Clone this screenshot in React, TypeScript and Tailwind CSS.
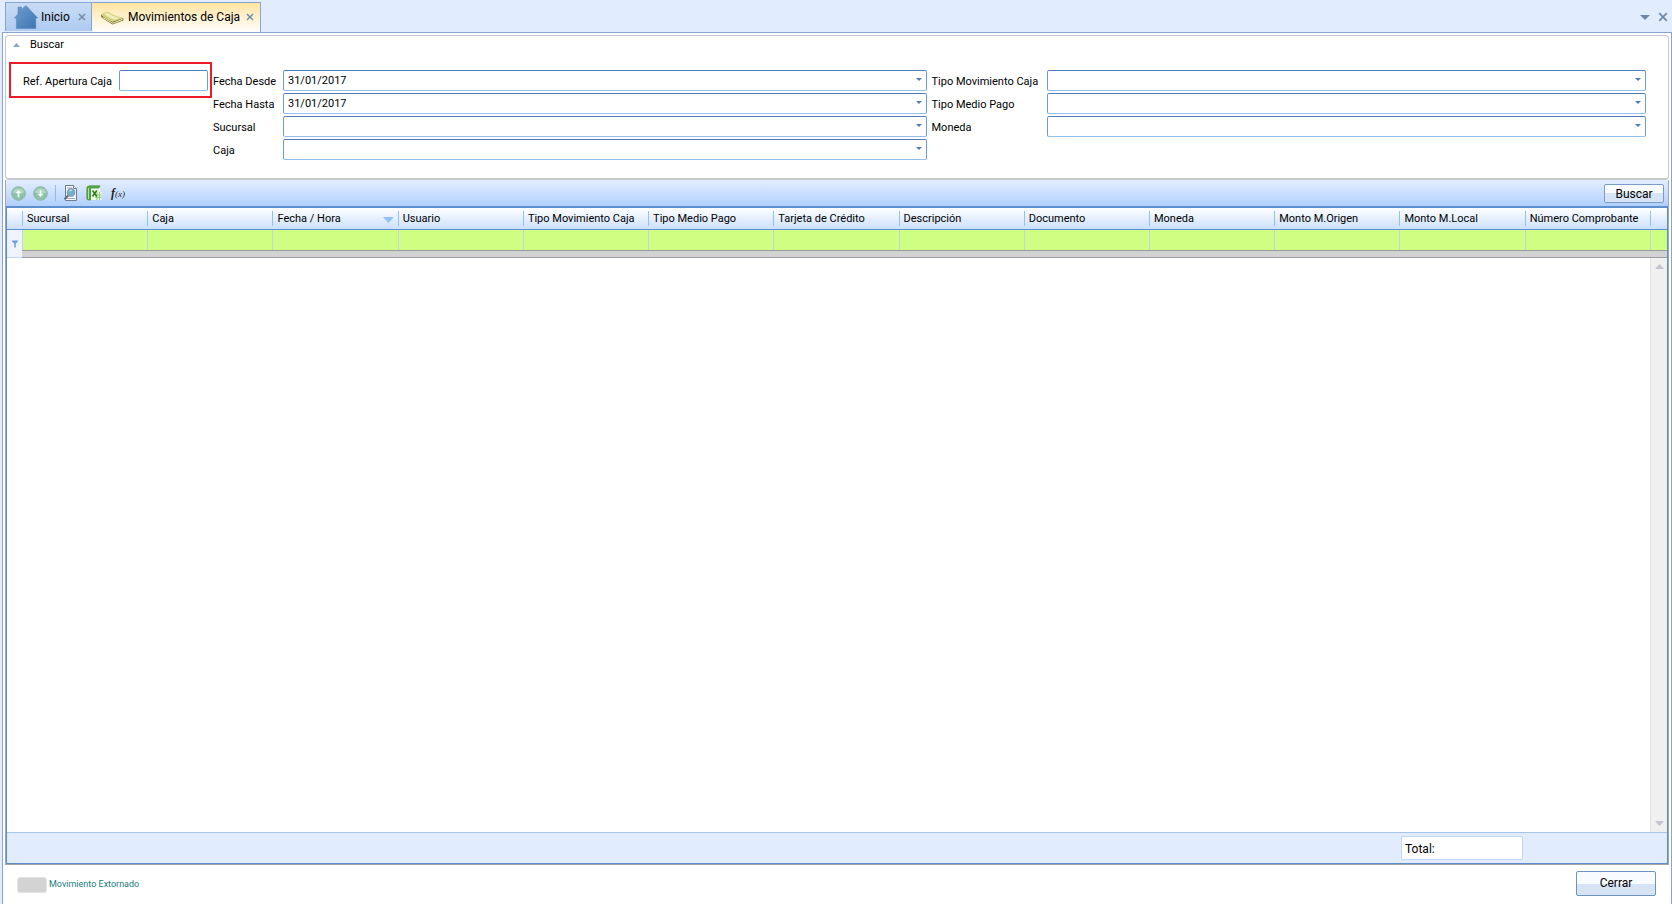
import { useState } from 'react';
import type { ReactNode } from 'react';

type Column = {
  id: string;
  label: string;
  sorted?: boolean;
};

const COLUMNS: Column[] = [
  { id: 'sucursal', label: 'Sucursal' },
  { id: 'caja', label: 'Caja' },
  { id: 'fecha', label: 'Fecha / Hora', sorted: true },
  { id: 'usuario', label: 'Usuario' },
  { id: 'tipo-movimiento', label: 'Tipo Movimiento Caja' },
  { id: 'tipo-medio', label: 'Tipo Medio Pago' },
  { id: 'tarjeta', label: 'Tarjeta de Crédito' },
  { id: 'descripcion', label: 'Descripción' },
  { id: 'documento', label: 'Documento' },
  { id: 'moneda', label: 'Moneda' },
  { id: 'monto-origen', label: 'Monto M.Origen' },
  { id: 'monto-local', label: 'Monto M.Local' },
  { id: 'comprobante', label: 'Número Comprobante' }
];

function HomeIcon() {
  return (
    <svg width="24" height="24" viewBox="0 0 24 24" aria-hidden="true">
      <defs>
        <linearGradient id="home-fill" x1="0" y1="0" x2="1" y2="1">
          <stop offset="0" stopColor="#6f9fcf" />
          <stop offset="1" stopColor="#3d74b0" />
        </linearGradient>
      </defs>
      <path d="M4 2h3.500V4.500L12 .5 23.700 13H21.800V23.500H2.400V13H.3L4 9Z" fill="url(#home-fill)" stroke="#5a8abf" strokeWidth=".6" />
    </svg>
  );
}

function BookIcon() {
  return (
    <svg width="24" height="16" viewBox="0 0 24 16" aria-hidden="true">
      <path d="M1 5.600Q.5 8 3 9.500L12.500 15.500 23.300 11.500V9L12.500 12.500Z" fill="#6e6a1d" />
      <path d="M2.500 7.800 12.800 13.700 22.500 9.800v1.200L12.800 14.700 3 9Z" fill="#f6f4d2" />
      <path d="M1 5.400Q4 3 8.800 2.800 12 6.500 23 8.800L12.600 12.800Q5.600 10.500 1 5.400Z" fill="#d3cf7c" />
      <path d="M4 4.800 8 4Q12.500 7.500 19.500 9L15 10.800Q8 9 4 4.800Z" fill="#efedb8" />
    </svg>
  );
}

function CloseIcon({ size }: { size: number }) {
  return (
    <svg width={size} height={size} viewBox="0 0 10 10" aria-hidden="true">
      <path d="M1.200 1.200 8.800 8.800M8.800 1.200 1.200 8.800" stroke="#7088a8" strokeWidth="1.700" fill="none" />
    </svg>
  );
}

function ArrowCircleIcon({ down }: { down?: boolean }) {
  return (
    <svg width="15" height="15" viewBox="0 0 15 15" aria-hidden="true">
      <circle cx="7.5" cy="7.500" r="6.800" fill="#8cc3a6" stroke="#8fb5a8" />
      <path d="M2 6.500a5.600 5 0 0 1 11 0Q7.500 8.500 2 6.500Z" fill="#b2dac4" />
      <path
        d={down ? 'M6.300 3.500h2.400v4h2.500L7.500 11.500 3.800 7.500h2.500Z' : 'M6.300 11.500h2.400v-4h2.500L7.500 3.500 3.800 7.500h2.500Z'}
        fill="#f2fbf6"
        stroke="#7fb598"
        strokeWidth=".4"
      />
    </svg>
  );
}

function PreviewIcon() {
  return (
    <svg width="16" height="16" viewBox="0 0 16 16" aria-hidden="true">
      <path d="M2.500.5h8l3 3v12h-11Z" fill="#f3f6fa" stroke="#6d7b8c" />
      <path d="M10.500.5v3h3" fill="#fff" stroke="#6d7b8c" />
      <path d="M4 13.500h8M4 3h5" stroke="#9fb0c2" />
      <circle cx="8" cy="7.500" r="3.700" fill="#6db4cc" stroke="#7c9bb0" strokeWidth="1.200" />
      <path d="M6 6.500a2.500 2.500 0 0 1 3-1.200" stroke="#d9f2f7" fill="none" />
      <path d="M5.200 10.500 1.500 14.200" stroke="#5a6b7c" strokeWidth="2" />
    </svg>
  );
}

function ExcelIcon() {
  return (
    <svg width="16" height="16" viewBox="0 0 16 16" aria-hidden="true">
      <path d="M.8 3Q1 .8 3.500.8H14L12.600 3.500H5V15H2Q.8 15 .8 13Z" fill="#57a442" stroke="#3f8a2e" strokeWidth=".6" />
      <path d="M2.500 3v11" stroke="#b9dfa4" />
      <path d="M5 3.500h9v3.500h1.500v8H5Z" fill="#eef8e6" />
      <path d="M9 10h6.500M9 12.500h6.500M11 7v8M13.500 7v8" stroke="#8fc978" />
      <path d="M6.500 5.500 10.800 11.500M10.800 5.500 6.500 11.500" stroke="#2f7d27" strokeWidth="1.600" />
    </svg>
  );
}

function Triangle({ className, up }: { className: string; up?: boolean }) {
  return (
    <svg className={className} viewBox="0 0 10 5" preserveAspectRatio="none" aria-hidden="true">
      <path d={up ? 'M5 0 10 5H0Z' : 'M0 0H10L5 5Z'} fill="currentColor" />
    </svg>
  );
}

const FIELD =
  'h-[21px] w-full rounded-[2px] border border-t-[#4f80bd] border-r-[#6a9ad8] border-b-[#92bfee] border-l-[#6a9ad8] bg-white pt-[2px]';

function Combo({ id, label, value = '' }: { id: string; label: string; value?: string }) {
  return (
    <>
      <label htmlFor={id} className="h-[21px] leading-[23px] whitespace-nowrap">
        {label}
      </label>
      <div className="relative">
        <select id={id} defaultValue={value} className={`${FIELD} appearance-none pr-5 pl-1 outline-none`}>
          <option value={value}>{value}</option>
        </select>
        <Triangle className="pointer-events-none absolute top-2 right-[5px] h-[3px] w-[6px] text-[#4f7dbb]" />
      </div>
    </>
  );
}

function ToolButton({ label, children }: { label: string; children: ReactNode }) {
  return (
    <button type="button" aria-label={label} className="flex h-4 items-center">
      {children}
    </button>
  );
}

function TabStrip() {
  return (
    <header className="flex items-end justify-between pr-1 pl-[5px]">
      <nav className="flex h-[30px] text-[12px]">
        <div className="flex h-[29px] w-[87px] items-center border border-b-0 border-[#86a5cf] bg-linear-to-b from-[#c9dcf5] to-[#aecbf0] pl-2">
          <button type="button" className="flex items-center gap-[3px]">
            <HomeIcon />
            Inicio
          </button>
          <button type="button" aria-label="Cerrar Inicio" className="ml-2">
            <CloseIcon size={8} />
          </button>
        </div>
        <div className="-mb-px flex w-[169px] items-center border border-b-0 border-l-0 border-[#86a5cf] bg-linear-to-b from-[#ffe3a0] to-white pb-[2px] pl-2">
          <button type="button" className="flex items-center gap-1 whitespace-nowrap">
            <BookIcon />
            Movimientos de Caja
          </button>
          <button type="button" aria-label="Cerrar Movimientos de Caja" className="ml-[6px]">
            <CloseIcon size={8} />
          </button>
        </div>
      </nav>
      <div className="flex h-[30px] items-center gap-2">
        <button type="button" aria-label="Lista de ventanas">
          <Triangle className="h-[5px] w-[10px] text-[#7088a8]" />
        </button>
        <button type="button" aria-label="Cerrar ventana">
          <CloseIcon size={10} />
        </button>
      </div>
    </header>
  );
}

function SearchPanel() {
  const [open, setOpen] = useState(true);
  const [apertura, setApertura] = useState('');

  return (
    <section className="rounded-[4px] border border-b-2 border-[#c8c8c8] bg-white">
      <button
        type="button"
        aria-expanded={open}
        onClick={() => setOpen(!open)}
        className="flex h-[18px] items-center gap-[10px] pl-[7px]"
      >
        <Triangle up className="h-1 w-[7px] text-[#86a5cf]" />
        Buscar
      </button>
      {open && (
        <form className="flex items-start pt-2 pr-[22px] pb-[18px] pl-[3px]">
          <div className="flex h-9 w-[203px] shrink-0 items-center justify-between border-2 border-[#ed1c24] pr-[2px] pl-3">
            <label htmlFor="apertura" className="h-[21px] leading-[23px] whitespace-nowrap">
              Ref. Apertura Caja
            </label>
            <div className="w-[89px]">
              <input
                id="apertura"
                value={apertura}
                onChange={(e) => setApertura(e.target.value)}
                className={`${FIELD} block px-1 outline-none`}
              />
            </div>
          </div>
          <div className="grid flex-[716] grid-cols-[70px_1fr] gap-y-[2px] pt-2 pl-px">
            <Combo id="desde" label="Fecha Desde" value="31/01/2017" />
            <Combo id="hasta" label="Fecha Hasta" value="31/01/2017" />
            <Combo id="sucursal" label="Sucursal" />
            <Combo id="caja" label="Caja" />
          </div>
          <div className="grid flex-[717] grid-cols-[115px_1fr] gap-y-[2px] pt-2 pl-[5px]">
            <Combo id="tipo-movimiento" label="Tipo Movimiento Caja" />
            <Combo id="tipo-medio" label="Tipo Medio Pago" />
            <Combo id="moneda" label="Moneda" />
          </div>
        </form>
      )}
    </section>
  );
}

function Toolbar() {
  return (
    <div className="flex h-[28px] items-center justify-between border-b-2 border-[#5b8fd0] bg-linear-to-b from-[#e3eeff] to-[#b1d0fd] pr-1 pl-[5px]">
      <div className="flex items-center gap-[7px]">
        <ToolButton label="Subir">
          <ArrowCircleIcon />
        </ToolButton>
        <ToolButton label="Bajar">
          <ArrowCircleIcon down />
        </ToolButton>
        <span className="h-4 w-px bg-[#9ab8dd]" />
        <ToolButton label="Vista previa">
          <PreviewIcon />
        </ToolButton>
        <ToolButton label="Exportar a Excel">
          <ExcelIcon />
        </ToolButton>
        <ToolButton label="Fórmula">
          <span className="pl-[2px] font-['Liberation_Serif',serif] text-[12px] font-bold text-[#222] italic">
            f<span className="text-[9px] font-normal">(x)</span>
          </span>
        </ToolButton>
      </div>
      <button
        type="button"
        className="h-[19px] w-[60px] rounded-[2px] border border-[#7b9cc9] bg-linear-to-b from-[#f8fbff] from-50% to-[#d6e4f5] to-50% pt-px text-[12px] leading-4"
      >
        Buscar
      </button>
    </div>
  );
}

function MovementsTable() {
  return (
    <table className="w-full table-fixed border-separate border-spacing-0">
      <colgroup>
        <col className="w-[15px]" />
        {COLUMNS.map((col) => (
          <col key={col.id} />
        ))}
        <col className="w-[17px]" />
      </colgroup>
      <thead>
        <tr className="h-[22px] bg-linear-to-b from-white to-[#c9defc]">
          <td className="border-b border-[#5b8fd0] p-0" />
          {COLUMNS.map((col) => (
            <th key={col.id} scope="col" className="border-b border-[#5b8fd0] p-0 text-left font-normal">
              <div className="flex h-[15px] items-center justify-between border-l border-[#92c0fb] px-1 pt-[2px] whitespace-nowrap">
                {col.label}
                {col.sorted && <Triangle className="h-[6px] w-[11px] text-[#92c0fb]" />}
              </div>
            </th>
          ))}
          <td className="border-b border-[#5b8fd0] p-0">
            <div className="h-[15px] border-l border-[#92c0fb]" />
          </td>
        </tr>
      </thead>
      <tbody>
        <tr className="h-[20px] bg-[#cfff82]">
          <td rowSpan={2} className="border-b border-[#c5d5ee] bg-[#edf4ff] p-0">
            <svg width="8" height="8" viewBox="0 0 8 8" className="mx-auto" aria-hidden="true">
              <path d="M1 .5h6v1L4.800 3.500V7.500H3.300V3.500L1 1.500Z" fill="#6f9fdc" />
            </svg>
          </td>
          {COLUMNS.map((col) => (
            <td key={col.id} className="border-l border-[#c5d5df] p-0">
              <input aria-label={`Filtrar ${col.label}`} className="block h-[20px] w-full px-1 outline-none" />
            </td>
          ))}
          <td className="border-l border-[#c5d5df] p-0" />
        </tr>
        <tr className="h-2">
          <td colSpan={14} className="border-y border-[#989ba0] bg-[#d3d3d3] p-0" />
        </tr>
      </tbody>
    </table>
  );
}

export default function App() {
  return (
    <div className="flex min-h-screen flex-col bg-[#e1edff] pt-[2px] font-['Roboto','Noto_Sans',sans-serif] text-[11px] text-black">
      <TabStrip />
      <main className="ml-[2px] flex flex-1 flex-col border border-b-0 border-[#86a5cf] bg-white pt-[2px] pr-[2px] pl-[2px]">
        <SearchPanel />
        <section className="flex flex-1 flex-col border border-t-0 border-[#a5a5a5]">
          <Toolbar />
          <div className="flex flex-1 flex-col border border-t-0 border-[#5b8fd0]">
            <MovementsTable />
            <div className="flex flex-1 justify-end bg-white">
              <div className="flex w-[17px] flex-col items-center justify-between border-l border-[#e3e3e3] bg-[#f0f0f0] py-[6px]">
                <button type="button" aria-label="Desplazar arriba">
                  <Triangle up className="h-[5px] w-[9px] text-[#c3c5cf]" />
                </button>
                <button type="button" aria-label="Desplazar abajo">
                  <Triangle className="h-[5px] w-[9px] text-[#c3c5cf]" />
                </button>
              </div>
            </div>
            <div className="flex h-[31px] items-center justify-end border-t border-[#a9c3ea] bg-[#e1edff] pr-[144px]">
              <label className="flex h-6 w-[122px] items-center rounded-[2px] border border-[#c3d6f0] bg-white pt-[2px] pl-[3px] text-[12px]">
                Total:
                <input readOnly className="ml-1 w-full min-w-0 outline-none" />
              </label>
            </div>
          </div>
        </section>
        <footer className="flex h-[39px] items-center justify-between pr-[13px] pl-3">
          <div className="flex items-center gap-[2px] text-[9px] text-[#1d7c7c]">
            <span className="h-4 w-[30px] rounded-[3px] border border-[#e3e3e3] bg-[#d3d3d3]" />
            Movimiento Extornado
          </div>
          <button
            type="button"
            className="mb-[3px] h-[25px] w-[80px] rounded-[2px] border border-[#6f91c0] bg-linear-to-b from-[#f8fbff] from-50% to-[#d6e4f5] to-50% text-[12px]"
          >
            Cerrar
          </button>
        </footer>
      </main>
    </div>
  );
}
